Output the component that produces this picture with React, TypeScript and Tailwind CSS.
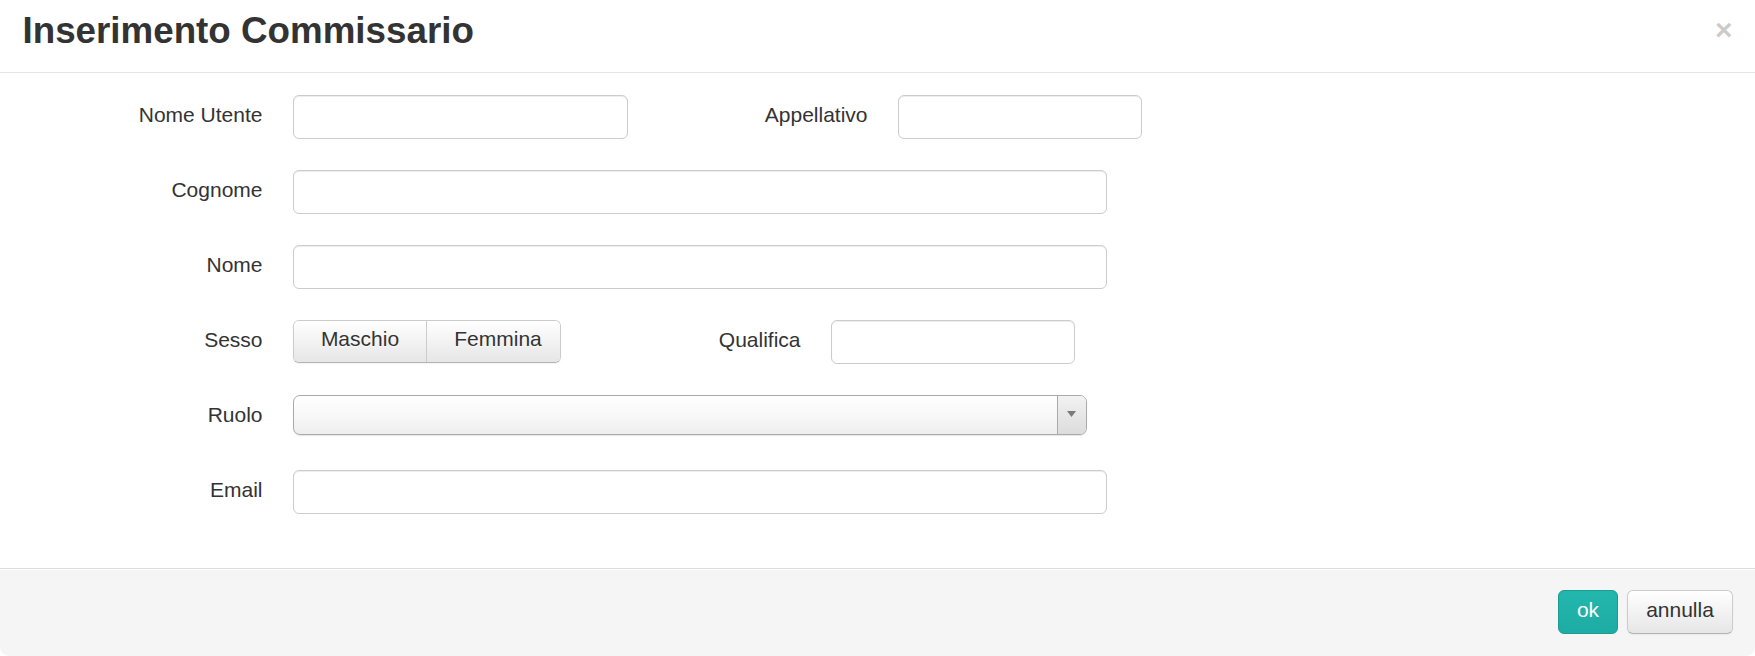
import React from 'react';

function TextInput({ width }: { width: string }) {
  return (
    <input
      type="text"
      className={`${width} h-[44px] rounded-[6px] border border-[#ccc] bg-white px-[9px] text-[21px] shadow-[inset_0_1px_1px_rgba(0,0,0,0.075)] outline-none`}
    />
  );
}

function Label({ children }: { children: React.ReactNode }) {
  return <label className="w-[240px] shrink-0 pt-[5px] text-right leading-[30px]">{children}</label>;
}

function Row({ children }: { children: React.ReactNode }) {
  return <div className="mb-[30px] flex h-[45px] items-start">{children}</div>;
}

export default function App() {
  return (
    <div className="flex h-[656px] w-[1755px] flex-col overflow-hidden rounded-[9px] bg-white font-['Liberation_Sans',Arial,sans-serif] text-[21px] text-[#333]">
      <div className="flex items-start justify-between border-b border-[#e5e5e5] px-[22.5px] pt-[8px] pb-[19px]">
        <h3 className="text-[36.75px] font-bold leading-[45px]">Inserimento Commissario</h3>
        <button className="mt-[7px] text-[30px] font-bold leading-[30px] text-black opacity-20">×</button>
      </div>

      <div className="flex-1 px-[22.5px] pt-[21.5px]">
        <Row>
          <Label>Nome Utente</Label>
          <div className="ml-[30px]">
            <TextInput width="w-[335px]" />
          </div>
          <Label>Appellativo</Label>
          <div className="ml-[30px]">
            <TextInput width="w-[244px]" />
          </div>
        </Row>

        <Row>
          <Label>Cognome</Label>
          <div className="ml-[30px]">
            <TextInput width="w-[814px]" />
          </div>
        </Row>

        <Row>
          <Label>Nome</Label>
          <div className="ml-[30px]">
            <TextInput width="w-[814px]" />
          </div>
        </Row>

        <Row>
          <Label>Sesso</Label>
          <div className="ml-[30px] flex h-[43px] w-[268px] overflow-hidden rounded-[6px] border border-[#ccc] border-b-[#b3b3b3] shadow-[0_1px_2px_rgba(0,0,0,0.05)]">
            <button className="w-[134px] bg-gradient-to-b from-white to-[#e6e6e6] pb-[4px] leading-[30px] text-[#333] [text-shadow:0_1px_1px_rgba(255,255,255,0.75)]">
              Maschio
            </button>
            <button className="w-[134px] border-l border-[#ccc] bg-gradient-to-b from-white to-[#e6e6e6] pb-[4px] pl-[9px] leading-[30px] text-[#333] [text-shadow:0_1px_1px_rgba(255,255,255,0.75)]">
              Femmina
            </button>
          </div>
          <Label>Qualifica</Label>
          <div className="ml-[30px]">
            <TextInput width="w-[244px]" />
          </div>
        </Row>

        <Row>
          <Label>Ruolo</Label>
          <div className="ml-[30px] flex h-[40px] w-[794px] overflow-hidden rounded-[7px] border border-[#aaa] bg-gradient-to-b from-white via-[#f8f8f8] to-[#eee] shadow-[0_1px_1px_rgba(0,0,0,0.1)]">
            <div className="flex-1" />
            <div className="flex w-[29px] items-center justify-center border-l border-[#aaa] bg-gradient-to-b from-[#f2f2f2] to-[#dcdcdc]">
              <svg width="9" height="7" viewBox="0 0 9 7">
                <path d="M0 0 L9 0 L4.5 6 Z" fill="#7a7a7a" />
              </svg>
            </div>
          </div>
        </Row>

        <Row>
          <Label>Email</Label>
          <div className="ml-[30px]">
            <TextInput width="w-[814px]" />
          </div>
        </Row>
      </div>

      <div className="flex justify-end gap-[9px] border-t border-[#ddd] bg-[#f5f5f5] px-[22px] pt-[21px] pb-[22.5px] shadow-[inset_0_1px_0_#fff]">
        <button className="h-[44px] w-[60px] rounded-[6px] border border-[#1a9b94] bg-gradient-to-b from-[#22b7ae] to-[#1eaca3] pb-[4px] text-white">
          ok
        </button>
        <button className="h-[44px] w-[106px] rounded-[6px] border border-[#ccc] border-b-[#b3b3b3] bg-gradient-to-b from-white to-[#e6e6e6] pb-[4px] text-[#333] shadow-[0_1px_2px_rgba(0,0,0,0.05)]">
          annulla
        </button>
      </div>
    </div>
  );
}
